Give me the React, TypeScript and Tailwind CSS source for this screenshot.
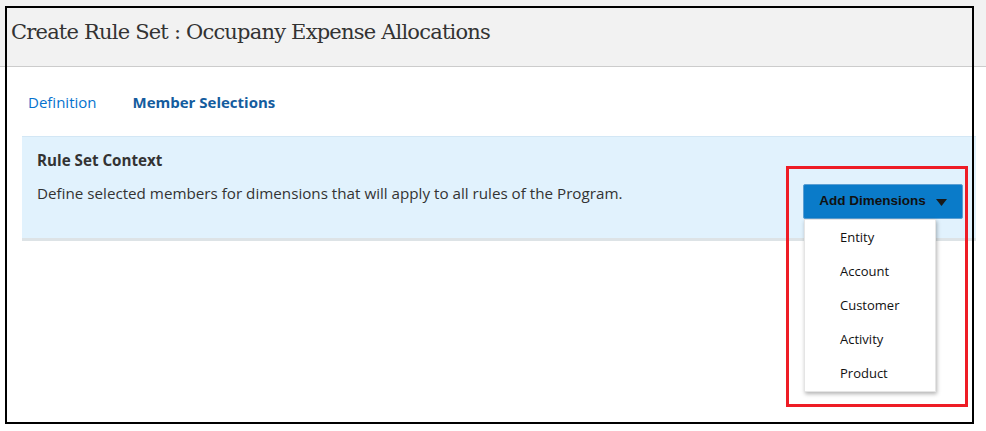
import React from 'react';

const dimensions = ['Entity', 'Account', 'Customer', 'Activity', 'Product'];

const CaretDown: React.FC = () => (
  <svg width="11" height="7" viewBox="0 0 11 7" className="ml-[10px] mt-[2px]">
    <path d="M0 0 H11 L5.5 7 Z" fill="#1a1a1a" />
  </svg>
);

const App: React.FC = () => {
  return (
    <div className="relative w-[986px] h-[431px] bg-white overflow-hidden font-['Open_Sans',Arial,sans-serif]">
      <header className="h-[67px] bg-[#f2f2f2] border-b border-[#cccccc] flex items-center pl-[11px]">
        <h1 className="text-[21px] text-[#333333] font-['DejaVu_Serif',Georgia,serif] tracking-[-0.8px]">
          Create Rule Set : Occupany Expense Allocations
        </h1>
      </header>

      <nav className="flex items-center gap-[36px] pl-[28px] pt-[2px] h-[69px] text-[15px]">
        <span className="text-[#0572ce]">Definition</span>
        <span className="text-[#145c9e] font-bold">Member Selections</span>
      </nav>

      <section className="ml-[22px] w-[954px] h-[105px] bg-[#e1f2fd] border-t border-[#d3e7f5] border-b-[3px] border-b-[#dde3e6] pl-[15px] pt-[13px] text-[#333333]">
        <h2 className="text-[15.2px] font-bold leading-[20px]">Rule Set Context</h2>
        <div className="flex items-start justify-between pr-[13px] mt-[13px]">
          <p className="text-[15.2px] leading-[20px]">
            Define selected members for dimensions that will apply to all rules of the Program.
          </p>
          <div className="relative mt-[1px]">
            <button className="h-[35px] w-[160px] rounded-[2px] bg-[#0a7bc9] border border-[#5b9fd3] flex items-center justify-center text-[13.5px] font-bold text-[#111111] font-['Liberation_Sans',Arial,sans-serif]">
              Add Dimensions
              <CaretDown />
            </button>
            <ul className="absolute left-[1px] top-[35px] w-[132px] bg-white shadow-[1px_2px_4px_rgba(0,0,0,0.3)] border border-[#e5e5e5] pt-[1px] text-[13px] text-[#111111]">
              {dimensions.map((d) => (
                <li key={d} className="h-[34px] flex items-center pl-[35px]">
                  {d}
                </li>
              ))}
            </ul>
          </div>
        </div>
      </section>

      {/* annotation frames drawn over the capture */}
      <div className="absolute left-[5px] top-[6px] w-[969px] h-[418px] border-2 border-black pointer-events-none" />
      <div className="absolute left-[786px] top-[166px] w-[182px] h-[241px] border-[3px] border-[#ee1c25] pointer-events-none" />
    </div>
  );
};

export default App;
